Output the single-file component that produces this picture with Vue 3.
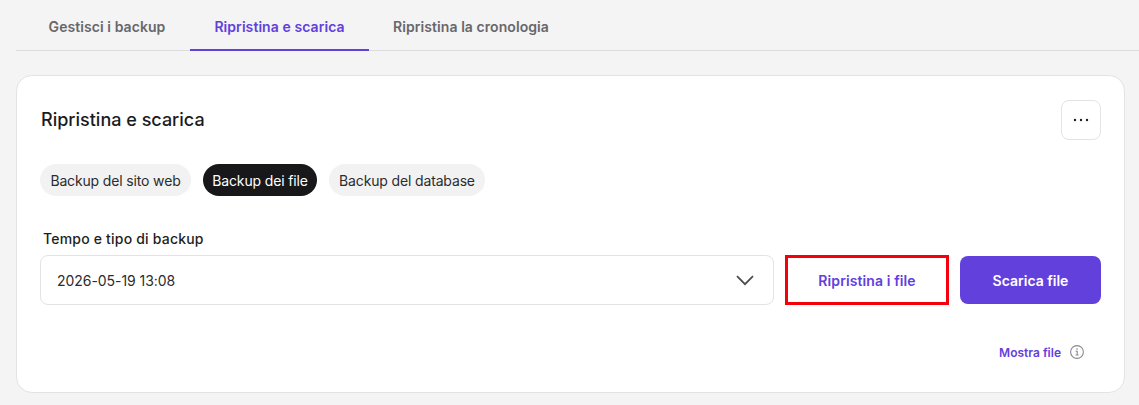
<script setup>
const tabs = [
  { label: 'Gestisci i backup', width: '166px' },
  { label: 'Ripristina e scarica', width: '179px', active: true },
  { label: 'Ripristina la cronologia', width: '204px' }
]
const chips = [
  { label: 'Backup del sito web', width: '151px' },
  { label: 'Backup dei file', width: '114px', active: true },
  { label: 'Backup del database', width: '156px' }
]
</script>

<template>
  <div class="page">
    <nav class="tabs">
      <a
        v-for="tab in tabs"
        :key="tab.label"
        class="tab"
        :class="{ active: tab.active }"
        :style="{ width: tab.width }"
      >{{ tab.label }}</a>
    </nav>

    <section class="card">
      <header class="card-head">
        <h2>Ripristina e scarica</h2>
        <button class="more" aria-label="Altro">
          <svg width="16" height="4" viewBox="0 0 16 4"><circle cx="2" cy="2" r="1.2" /><circle cx="8" cy="2" r="1.2" /><circle cx="14" cy="2" r="1.2" /></svg>
        </button>
      </header>

      <div class="chips">
        <span
          v-for="chip in chips"
          :key="chip.label"
          class="chip"
          :class="{ active: chip.active }"
          :style="{ width: chip.width }"
        >{{ chip.label }}</span>
      </div>

      <label class="field-label">Tempo e tipo di backup</label>
      <div class="actions">
        <div class="select">
          <span>2026-05-19 13:08</span>
          <svg width="18" height="11" viewBox="0 0 18 11" fill="none"><path d="M1 1.2 9 9.2 17 1.2" stroke="#4a4a4f" stroke-width="1.7" /></svg>
        </div>
        <button class="btn restore">Ripristina i file</button>
        <button class="btn download">Scarica file</button>
      </div>

      <div class="show">
        <a>Mostra file</a>
        <svg width="16" height="16" viewBox="0 0 16 16" fill="none">
          <circle cx="8" cy="8" r="6.4" stroke="#8a8a90" stroke-width="1.1" />
          <path d="M6.6 7.2H8.2V11M6.6 11H9.6" stroke="#8a8a90" stroke-width="1.1" />
          <circle cx="8" cy="5" r=".8" fill="#8a8a90" />
        </svg>
      </div>
    </section>
  </div>
</template>

<style>
body { margin: 0; background: #f4f4f4; }
</style>

<style scoped>
.page {
  width: 1139px;
  height: 405px;
  box-sizing: border-box;
  padding: 0 14px 0 16px;
  background: #f4f4f4;
  font-family: Inter, "Liberation Sans", sans-serif;
  color: #1d1e20;
  overflow: hidden;
}
.tabs {
  display: flex;
  height: 51px;
  box-sizing: border-box;
  border-bottom: 1px solid #dadce0;
  margin-right: -14px;
  padding-left: 8px;
}
.tab {
  box-sizing: border-box;
  height: 51px;
  padding-top: 18px;
  text-align: center;
  font-size: 14px;
  line-height: 17px;
  letter-spacing: .07px;
  font-weight: 600;
  color: #67676c;
  white-space: nowrap;
}
.tab.active {
  border-bottom: 2px solid #6240dc;
  color: #6240dc;
}
.card {
  box-sizing: border-box;
  margin-top: 24px;
  height: 318px;
  background: #fff;
  border: 1px solid #e3e3e5;
  border-radius: 16px;
  padding: 24px 23px 24px 24px;
}
.card-head {
  display: flex;
  justify-content: space-between;
  align-items: center;
  height: 40px;
}
h2 {
  margin: 0;
  font-size: 18px;
  line-height: 24px;
  font-weight: 500;
  color: #1a1b1d;
}
.more {
  width: 40px;
  height: 40px;
  box-sizing: border-box;
  background: #fff;
  border: 1px solid #e3e3e5;
  border-radius: 8px;
  padding: 0;
  display: flex;
  align-items: center;
  justify-content: center;
}
.more circle { fill: #1d1e20; }
.chips {
  display: flex;
  gap: 12px;
  margin-top: 24px;
  margin-left: -1px;
}
.chip {
  box-sizing: border-box;
  height: 32px;
  border-radius: 16px;
  background: #f2f2f2;
  display: flex;
  align-items: center;
  justify-content: center;
  font-size: 14px;
  letter-spacing: -.15px;
  color: #2b2c2e;
  white-space: nowrap;
}
.chip.active { background: #18181a; color: #fff; }
.field-label {
  display: block;
  margin: 34px 0 0 2px;
  font-size: 14px;
  line-height: 18px;
  letter-spacing: .2px;
  font-weight: 500;
  color: #1d1e20;
}
.actions {
  display: flex;
  align-items: center;
  margin-top: 7px;
  margin-left: -1px;
}
.select {
  box-sizing: border-box;
  width: 734px;
  height: 50px;
  border: 1px solid #e3e3e5;
  border-radius: 8px;
  display: flex;
  align-items: center;
  justify-content: space-between;
  padding: 0 19px 0 16px;
  font-size: 14px;
  letter-spacing: -.05px;
  color: #2b2c2e;
}
.btn {
  box-sizing: border-box;
  font-family: inherit;
  font-size: 14px;
  font-weight: 600;
  border-radius: 8px;
}
.restore {
  width: 164px;
  height: 50px;
  margin-left: 11px;
  background: #fff;
  border: 3px solid #f5000a;
  border-radius: 0;
  letter-spacing: .1px;
  color: #6240dc;
}
.download {
  width: 141px;
  height: 48px;
  margin-left: 11px;
  background: #6240dc;
  border: 0;
  color: #fff;
}
.show {
  display: flex;
  justify-content: flex-end;
  align-items: center;
  gap: 8px;
  margin-top: 39px;
  padding-right: 16px;
  font-size: 12px;
  font-weight: 600;
  color: #6240dc;
}
</style>
